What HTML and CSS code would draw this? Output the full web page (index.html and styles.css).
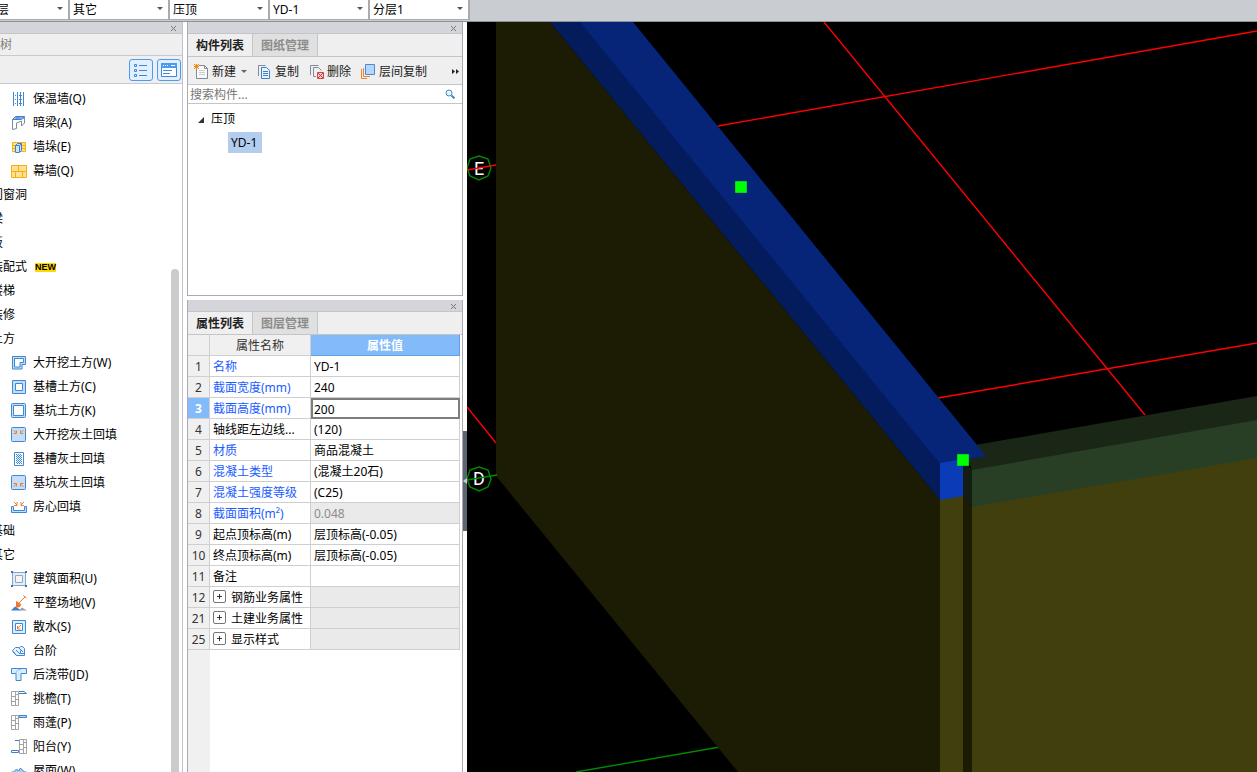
FILE: index.html
```html
<!DOCTYPE html>
<html lang="zh-CN">
<head>
  <meta charset="UTF-8">
  <title>构件建模</title>
  <link rel="stylesheet" href="styles.css">
</head>
<body>
  <header class="topbar">
    <label class="pick"><select aria-label="楼层"><option>基础层</option></select></label>
    <label class="pick"><select aria-label="类别"><option>其它</option></select></label>
    <label class="pick"><select aria-label="构件类型"><option>压顶</option></select></label>
    <label class="pick"><select aria-label="构件"><option>YD-1</option></select></label>
    <label class="pick"><select aria-label="分层"><option>分层1</option></select></label>
  </header>

  <main class="workspace">
    <aside class="nav">
      <div class="titlebar"><button class="close" aria-label="关闭"><svg viewBox="0 0 7 7"><path d="M1 1l5 5M6 1L1 6"/></svg></button></div>
      <h2 class="nav-title">树</h2>
      <div class="nav-tools">
        <button aria-label="列表">
          <svg viewBox="0 0 14 14" class="blue"><path d="M.5 1.500h2v2h-2zM.5 6.500h2v2h-2zM.5 11.500h2v2h-2zM5 2.500h8M5 7.500h8M5 12.500h8"/></svg>
        </button>
        <button aria-label="窗口">
          <svg viewBox="0 0 16 14" class="blue"><path d="M.5 .5h15v13H.5z" fill="#fff"/><path d="M0 0h16v5H0z" fill="#4b9cf0" stroke="none"/><path d="M2 2.500h1M4 2.500h1M6 2.500h1M10 2.500h4" stroke="#fff"/><path d="M2 7.500h9M2 10.500h7"/></svg>
        </button>
      </div>
      <div class="nav-body">
        <ul class="nav-list">
          <li><svg class="icon blue" viewBox="0 0 16 16"><path d="M2.500 1v14M6.500 1v14M9.500 1v14M12.500 1v14"/><path d="M2 4.500h12M2 8.500h12M2 12.500h12" stroke-dasharray="1 1"/></svg>保温墙(Q)</li>
          <li><svg class="icon" viewBox="0 0 16 16"><path d="M1.500 4.500l3-3h9l-3 3z" fill="#b9d8f8" stroke="#3c80cc"/><path d="M4 3h9M5 4.500l3-3" fill="none" stroke="#3c80cc"/><path d="M1.500 5v9.500l4-1V8l5-2v5l3-3V2" fill="none" stroke="#7f8b96"/></svg>暗梁(A)</li>
          <li><svg class="icon" viewBox="0 0 16 16"><path d="M1.500 3.500h13v9h-13zM2 6.500h12M2 9.500h12" fill="#ffe08a" stroke="#f5b21b"/><path d="M4.500 6.500l2-2h4v7l-2 2h-4zM8.500 13V6.500l2-2M4.500 6.500h4" fill="#cfe3f7" stroke="#3c80cc"/></svg>墙垛(E)</li>
          <li><svg class="icon" viewBox="0 0 16 16"><path d="M.5 2.500h15v12H.5zM.5 8.500h15M7.500 2.500v6M4.500 8.500v6M11.500 8.500v6" fill="#ffe096" stroke="#f9ae0b"/></svg>幕墙(Q)</li>
          <li class="group">门窗洞</li>
          <li class="group">梁</li>
          <li class="group">板</li>
          <li class="group">装配式 <b class="new">NEW</b></li>
          <li class="group">楼梯</li>
          <li class="group">装修</li>
          <li class="group">土方</li>
          <li><svg class="icon blue" viewBox="0 0 16 16"><path d="M1.500 1.500h13v8h-3.500v4.500H1.500z" fill="#c5ddf6"/><path d="M3.500 3.500h9v4H9v4.500H3.500z" fill="#fff"/></svg>大开挖土方(W)</li>
          <li><svg class="icon blue" viewBox="0 0 16 16"><path d="M1.500 1.500h13v13h-13z" fill="#c5ddf6"/><path d="M4.500 4.500h7v7h-7z" fill="#fff"/></svg>基槽土方(C)</li>
          <li><svg class="icon blue" viewBox="0 0 16 16"><rect x=".5" y=".5" width="14" height="14" rx="1" fill="#c5ddf6"/><path d="M2.500 2.500h10v10h-10z" fill="#fff"/></svg>基坑土方(K)</li>
          <li><svg class="icon blue" viewBox="0 0 16 16"><rect x=".5" y=".5" width="14" height="14" rx="1" fill="#c5ddf6"/><path class="orange" d="M2.500 3l3 3M5.500 3.500v3h-3M12.500 3l-3 3M9.500 3.500v3h3"/></svg>大开挖灰土回填</li>
          <li><svg class="icon blue" viewBox="0 0 16 16"><path d="M3.500 1.500h9v13h-9z"/><path d="M5.500 3v10M7.500 3v10M9.500 3v10" stroke-dasharray="1 1"/><path d="M6.500 4v9M8.500 4v9M10.500 4v9" stroke-dasharray="1 1"/></svg>基槽灰土回填</li>
          <li><svg class="icon blue" viewBox="0 0 16 16"><rect x=".5" y=".5" width="14" height="14" rx="1" fill="#c5ddf6"/><path class="orange" d="M2.500 12l3-3M2.500 8.500h3v3M12.500 12l-3-3M12.500 8.500h-3v3"/></svg>基坑灰土回填</li>
          <li><svg class="icon blue" viewBox="0 0 16 16"><path d="M.5 7.500h2v4h11v-4h2v6H.5z" fill="#c5ddf6"/><path class="orange" d="M3 3l3 3M6 3v3.500H3M13 3l-3 3M10 3v3.500h3"/></svg>房心回填</li>
          <li class="group">基础</li>
          <li class="group">其它</li>
          <li><svg class="icon" viewBox="0 0 16 16"><path d="M1.500 1.500h13v13h-13z" fill="#e3eefa" stroke="#7ba9dc"/><path d="M4.500 4.500h7v7h-7z" fill="#f6f6f6" stroke="#a5a5a5"/><path d="M0 0h2v2H0zM14 0h2v2h-2zM0 14h2v2H0zM14 14h2v2h-2z" fill="#3c73b0"/></svg>建筑面积(U)</li>
          <li><svg class="icon" viewBox="0 0 16 16"><path d="M0 15.500l4-4 2 1 4 3z" fill="#3c80cc"/><path d="M8 15.500l3-3 5 3z" fill="#9aa0a6"/><path d="M5 6l5 3c0 4-4 4-5 3z" fill="#f0772b"/><path d="M8 8l6-6M12.500 .5l3 2.500" fill="none" stroke="#f0772b"/></svg>平整场地(V)</li>
          <li><svg class="icon blue" viewBox="0 0 16 16"><path d="M1.500 1.500h13v13h-13z" fill="#e0edfb"/><path d="M4.500 4.500h7v7h-7z" fill="#fff"/><path class="orange" d="M10 6l-4 4M6.500 7v3h3"/></svg>散水(S)</li>
          <li><svg class="icon blue" viewBox="0 0 16 16"><path d="M1.500 7.500l3-3h4l1-1h2l2 2v7h-8zM5.500 12.500l-4-4M5 7l4 4M8 5l4 4M9.500 7.500v3h4" fill="#e7f1fc"/></svg>台阶</li>
          <li><svg class="icon blue" viewBox="0 0 16 16"><path d="M.5 1.500h15v5H10v7H5v-7H.5z" fill="#dcebfa"/><path d="M5 6.500c0-3 2-4 5-4" stroke="#8fbcec"/></svg>后浇带(JD)</li>
          <li><svg class="icon grey" viewBox="0 0 16 16"><path d="M.5 .5h7v14h-7zM4.500 .5v14M.5 5.500h4M4.500 3.500h3M.5 10.500h4M4.500 8.500h3"/><path d="M8 .5h5l2.500 2H8" stroke="#3c80cc"/></svg>挑檐(T)</li>
          <li><svg class="icon grey" viewBox="0 0 16 16"><path d="M.5 .5h7v14h-7zM4.500 .5v14M.5 5.500h4M4.500 3.500h3M.5 10.500h4M4.500 8.500h3"/><path d="M8 .5h7.500v2H8z" stroke="#3c80cc" fill="#b9d8f8"/></svg>雨蓬(P)</li>
          <li><svg class="icon grey" viewBox="0 0 16 16"><path d="M8.500 .5h7v14h-7zM12.500 .5v14M8.500 5.500h4M12.500 3.500h3M8.500 10.500h4M12.500 8.500h3"/><path d="M4 1.500h4M.5 11.500h7v2h-7z" stroke="#3c80cc"/></svg>阳台(Y)</li>
          <li><svg class="icon blue" viewBox="0 0 16 16"><path d="M.5 12V9h2l3-3 2 2 2-3 4 4h2v3z" fill="#a9c9ee"/></svg>屋面(W)</li>
        </ul>
        <div class="scrollbar"></div>
      </div>
    </aside>

    <div class="panels">
      <section class="panel components">
        <div class="titlebar"><button class="close" aria-label="关闭"><svg viewBox="0 0 7 7"><path d="M1 1l5 5M6 1L1 6"/></svg></button></div>
        <div class="tabs">
          <button class="tab active">构件列表</button>
          <button class="tab">图纸管理</button>
        </div>
        <div class="tools">
          <button class="has-menu"><svg class="icon grey-dark" viewBox="0 0 16 16"><path d="M2.500 1.500h8l3 3v10h-11z" fill="#fafafa"/><path d="M10.500 1.500v3h3"/><path d="M5 6.500h6M5 8.500h6M5 10.500h6" stroke="#c9ced3"/><path d="M0 0h5v5H0z" fill="#fbe3c4" stroke="none"/><path d="M0 0l5 5M5 0L0 5M2.500 0v5M0 2.500h5" stroke="#f08a1d"/></svg>新建<i class="arrow"></i></button>
          <button><svg class="icon" viewBox="0 0 16 16"><path d="M1.500 12V1.500h7" fill="none" stroke="#7f8b96"/><path d="M4.500 3.500h5l3 3v8h-8z" fill="#eaf3fd" stroke="#3c80cc"/><path d="M6 7.500h5M6 9.500h5M6 11.500h5" stroke="#3c80cc"/></svg>复制</button>
          <button><svg class="icon grey-dark" viewBox="0 0 16 16"><path d="M1.500 11V1.500h8M7 12.500H4.500V3.500h5l3 3"/><path d="M8.500 8.500h6v6h-6z" fill="#f5d5d5" stroke="#cf4444"/><path d="M9 9l5 5M14 9l-5 5" stroke="#cf3030"/></svg>删除</button>
          <button><svg class="icon" viewBox="0 0 16 16"><path d="M4.500 .5h9v10h-9z" fill="#b5d6fc" stroke="#4a8bd0"/><path d="M.5 5v9.500H6M2.500 4v8.500H9" fill="none" stroke="#ef7f2b"/></svg>层间复制</button>
          <button class="more" aria-label="更多"><svg viewBox="0 0 8 5"><path d="M0 0l3 2.500L0 5zM4 0l3 2.500L4 5z"/></svg></button>
        </div>
        <label class="search">
          <input type="text" placeholder="搜索构件..." aria-label="搜索构件">
          <svg viewBox="0 0 10 10"><circle cx="4" cy="4" r="3" fill="#eaf5fc"/><path d="M6.500 6.500l3 3" stroke-width="2"/></svg>
        </label>
        <ul class="tree">
          <li><svg class="twisty" viewBox="0 0 6 6"><path d="M6 0v6H0z"/></svg>压顶
            <ul><li><span class="selected">YD-1</span></li></ul>
          </li>
        </ul>
      </section>

      <section class="panel properties">
        <div class="titlebar"><button class="close" aria-label="关闭"><svg viewBox="0 0 7 7"><path d="M1 1l5 5M6 1L1 6"/></svg></button></div>
        <div class="tabs">
          <button class="tab active">属性列表</button>
          <button class="tab">图层管理</button>
        </div>
        <div class="sheet">
          <table>
            <thead>
              <tr><th class="num"></th><th class="name">属性名称</th><th class="value">属性值</th></tr>
            </thead>
            <tbody>
              <tr><th>1</th><td class="key">名称</td><td>YD-1</td></tr>
              <tr><th>2</th><td class="key">截面宽度(mm)</td><td>240</td></tr>
              <tr class="current"><th>3</th><td class="key">截面高度(mm)</td><td class="edit"><input type="text" value="200" aria-label="截面高度(mm)"></td></tr>
              <tr><th>4</th><td>轴线距左边线...</td><td>(120)</td></tr>
              <tr><th>5</th><td class="key">材质</td><td>商品混凝土</td></tr>
              <tr><th>6</th><td class="key">混凝土类型</td><td>(混凝土20石)</td></tr>
              <tr><th>7</th><td class="key">混凝土强度等级</td><td>(C25)</td></tr>
              <tr><th>8</th><td class="key">截面面积(m²)</td><td class="locked">0.048</td></tr>
              <tr><th>9</th><td>起点顶标高(m)</td><td>层顶标高(-0.05)</td></tr>
              <tr><th>10</th><td>终点顶标高(m)</td><td>层顶标高(-0.05)</td></tr>
              <tr><th>11</th><td>备注</td><td></td></tr>
              <tr><th>12</th><td><button class="expand" aria-label="展开"></button>钢筋业务属性</td><td class="locked"></td></tr>
              <tr><th>21</th><td><button class="expand" aria-label="展开"></button>土建业务属性</td><td class="locked"></td></tr>
              <tr><th>25</th><td><button class="expand" aria-label="展开"></button>显示样式</td><td class="locked"></td></tr>
            </tbody>
          </table>
        </div>
      </section>
    </div>

    <div class="splitter"><button class="handle" aria-label="收起"><svg viewBox="0 0 4 6"><path d="M4 0v6L0 3z"/></svg></button></div>

    <div class="viewport">
      <svg class="scene" viewBox="467 22 790 750" preserveAspectRatio="xMinYMin slice">
        <!-- axis grid -->
        <g class="axis">
          <path d="M718 126L1257 31M824 22L1145 415M938 398L1257 343M467 407L496 443"/>
          <path class="green" d="M576 772L720 747"/>
        </g>
        <!-- left wall -->
        <path fill="#1c1c05" d="M496 22h54l390 478v272H738L496 476z"/>
        <!-- right wall and its coping -->
        <path fill="#1a2717" d="M964 447L1257 396v25L972 471z"/>
        <path fill="#403f0d" d="M972 506L1257 456v316H972z"/>
        <path fill="#293f25" d="M972 470L1257 420v38L972 507z"/>
        <path fill="#131d11" d="M963 459l9 11v37l-9-10z"/>
        <path fill="#1c1c05" d="M963 496l9 11v265h-9z"/>
        <path fill="#403f0d" d="M940 499l23-4v277h-23z"/>
        <!-- selected coping -->
        <path fill="#041b5c" d="M550 22h32l358 440v38z"/>
        <path fill="#062478" d="M580 22h53l353 434-46 8z"/>
        <path fill="#0b3bb7" d="M940 463l23-4v37l-23 4z"/>
        <path class="grip" d="M735.500 181.500h11v11h-11zM957.500 454.500h11v11h-11z"/>
        <!-- axis labels -->
        <text x="479" y="175">E</text>
        <text x="479" y="485">D</text>
        <g class="bubble">
          <path d="M479 156l9 3 3 9-3 8-9 4-9-4-3-8 3-9z"/>
          <path d="M479 467l9 3 3 9-3 8-9 4-9-4-3-8 3-9z"/>
          <path d="M467 480l30-5"/>
          <path class="red" d="M467 170l29-5"/>
        </g>
      </svg>
    </div>
  </main>
</body>
</html>
```

FILE: styles.css
```css
* {
  box-sizing: border-box;
}

body {
  margin: 0;
  height: 100vh;
  display: flex;
  flex-direction: column;
  overflow: hidden;
  background: #fff;
  color: #000;
  font: 12px/20px "Noto Sans", "Noto Sans CJK SC", sans-serif;
}

button, input, select {
  font: inherit;
  color: inherit;
  border: 0;
  border-radius: 0;
  padding: 0;
  margin: 0;
  background: none;
}

ul {
  list-style: none;
  margin: 0;
  padding: 0;
}

svg {
  display: block;
  fill: none;
}

.icon {
  width: 16px;
  height: 16px;
  flex: none;
}

.blue { stroke: #3f88d8; }
.grey { stroke: #a3a3a3; }
.grey-dark { stroke: #7f8b96; }
.orange { stroke: #e8803c; }

/* top selectors */
.topbar {
  height: 22px;
  flex: none;
  display: flex;
  margin-left: -31px;
  padding-left: 1px;
  background: #c9ccd1;
  border-bottom: 1px solid #8e9196;
}

.pick {
  position: relative;
  width: 100px;
  height: 20px;
}

.pick select {
  display: block;
  appearance: none;
  width: 100%;
  height: 20px;
  padding: 0 3px 4px;
  background: #fff;
  border-right: 2px solid #a9abb0;
  border-bottom: 1px solid #a9abb0;
}

.pick::after {
  content: "";
  position: absolute;
  right: 7px;
  top: 7px;
  border: 3px solid transparent;
  border-top-color: #555;
  border-bottom: 0;
}

.workspace {
  flex: 1;
  min-height: 0;
  display: flex;
}

.titlebar {
  height: 12px;
  flex: none;
  display: flex;
  justify-content: flex-end;
  align-items: center;
  padding: 2px 5px 0 0;
  background: #d4d5da;
  border-bottom: 1px solid #c3c5ca;
}

.close svg {
  width: 7px;
  height: 7px;
  stroke: #777;
}

/* navigation */
.nav {
  width: 183px;
  flex: none;
  display: flex;
  flex-direction: column;
  border-right: 1px solid #c2c3ca;
}

.nav-title {
  height: 22px;
  flex: none;
  margin: 0;
  padding-top: 1px;
  font-size: 12px;
  font-weight: normal;
  color: #808080;
  background: #efefef;
  border-bottom: 1px solid #c8c9cd;
}

.nav-tools {
  height: 28px;
  flex: none;
  display: flex;
  justify-content: flex-end;
  align-items: center;
  gap: 4px;
  padding-right: 1px;
  background: #efefef;
  border-bottom: 1px solid #c8c9cd;
}

.nav-tools button {
  width: 24px;
  height: 22px;
  display: flex;
  align-items: center;
  justify-content: center;
  background: #e2f0fe;
  border: 1px solid #4b9cf0;
  border-radius: 3px;
}

.nav-tools svg {
  height: 14px;
}

.nav-body {
  flex: 1;
  min-height: 0;
  display: flex;
  justify-content: space-between;
  overflow: hidden;
}

.nav-list {
  padding-top: 3px;
}

.nav-list li {
  height: 24px;
  display: flex;
  align-items: center;
  gap: 6px;
  padding-left: 11px;
  white-space: nowrap;
}

.nav-list .group {
  margin-left: -9px;
  padding-left: 0;
  gap: 8px;
}

.new {
  font: bold 9px/9px "Liberation Sans", sans-serif;
  background: #ffd900;
}

.scrollbar {
  width: 8px;
  margin: 185px 3px 0 0;
  background: #cbcbcb;
  border-radius: 4px 4px 0 0;
}

/* middle column */
.panels {
  width: 276px;
  flex: none;
  margin-left: 4px;
  display: flex;
  flex-direction: column;
  gap: 4px;
}

.panel {
  display: flex;
  flex-direction: column;
  border: 1px solid #a9abb0;
  border-top: 0;
}

.components {
  height: 274px;
  flex: none;
}

.properties {
  flex: 1;
  min-height: 0;
  border-bottom: 0;
}

.tabs {
  height: 23px;
  flex: none;
  display: flex;
  background: #efefef;
  border-bottom: 1px solid #c3c5ca;
}

.tab {
  width: 65px;
  padding-top: 2px;
  font-weight: bold;
  color: #8c8c8c;
  background: #e0e0e0;
  border-right: 1px solid #c3c5ca;
}

.tab.active {
  color: #222;
  background: #efefef;
}

.tools {
  height: 28px;
  flex: none;
  display: flex;
  align-items: center;
  gap: 10px;
  padding: 2px 0 0 6px;
  color: #222;
  background: #efefef;
  border-bottom: 1px solid #c3c5ca;
}

.tools button {
  display: flex;
  align-items: center;
  gap: 2px;
}

.arrow {
  margin-left: 3px;
  border: 3px solid transparent;
  border-top-color: #666;
  border-bottom: 0;
}

.tools .more {
  margin: 0 2px 0 auto;
}

.more svg {
  width: 8px;
  height: 5px;
  fill: #222;
}

.search {
  height: 19px;
  flex: none;
  display: flex;
  align-items: center;
  padding: 0 7px 0 2px;
  border-bottom: 1px solid #c3c5ca;
}

.search input {
  flex: 1;
  min-width: 0;
  height: 18px;
  padding-top: 2px;
  outline: 0;
}

.search input::placeholder {
  color: #777;
}

.search svg {
  width: 10px;
  height: 10px;
  stroke: #3c8fc0;
}

.tree {
  padding: 3px 10px;
  line-height: 24px;
}

.tree ul {
  padding-left: 30px;
}

.twisty {
  display: inline-block;
  width: 6px;
  height: 6px;
  margin-right: 7px;
  fill: #333;
}

.selected {
  display: inline-block;
  padding: 0 5px 0 3px;
  line-height: 21px;
  background: #b3cdef;
}

/* property sheet */
.sheet {
  flex: 1;
  min-height: 0;
  background: linear-gradient(to right, #f0f0f0 22px, #fff 22px);
}

table {
  width: calc(100% - 2px);
  table-layout: fixed;
  border-collapse: separate;
  border-spacing: 0;
}

th, td {
  height: 21px;
  padding: 2px 0 0;
  line-height: 18px;
  text-align: left;
  white-space: nowrap;
  background: #fff;
  border-right: 1px solid #cfcfcf;
  border-bottom: 1px solid #cfcfcf;
}

th {
  font-weight: normal;
  text-align: center;
  color: #333;
  background: #f0f0f0;
}

.num { width: 22px; }
.name { width: 101px; }

thead .value {
  font-weight: bold;
  color: #fff;
  background: #83bbfa;
  border-color: #5f9fe8;
}

td {
  padding-left: 3px;
}

.key {
  color: #1a5cff;
}

.locked {
  color: #8c8c8c;
  background: #eaeaea;
}

.current th {
  font-weight: bold;
  color: #fff;
  background: #83bbfa;
}

.edit {
  padding: 0;
  border: 0;
}

.edit input {
  display: block;
  width: 100%;
  height: 21px;
  padding: 1px 0 0 1px;
  border: 2px solid #7d7d7d;
}

.expand {
  width: 13px;
  height: 13px;
  margin: 1px 5px 0 0;
  vertical-align: top;
  border: 1px solid #777;
  border-radius: 2px;
  background:
    linear-gradient(#333, #333) center / 5px 1px no-repeat,
    linear-gradient(#333, #333) center / 1px 5px no-repeat;
}

/* splitter */
.splitter {
  width: 4px;
  flex: none;
  display: flex;
  flex-direction: column;
  justify-content: center;
  padding-top: 168px;
}

.handle {
  height: 100px;
  background: #5b6672;
}

.handle svg {
  width: 4px;
  height: 6px;
  fill: #c9ccd1;
}

/* 3d view */
.viewport {
  flex: 1;
  min-width: 0;
  background: #000;
}

.scene {
  width: 100%;
  height: 100%;
}

.axis, .bubble {
  stroke: #f00;
  stroke-width: 1.4;
}

.axis .green, .bubble {
  stroke: #008a00;
}

.bubble .red {
  stroke: #f00;
}

.grip {
  fill: #0f0;
  stroke: #00d818;
}

.scene text {
  fill: #fff;
  font: 18px Roboto, sans-serif;
  text-anchor: middle;
}
```
